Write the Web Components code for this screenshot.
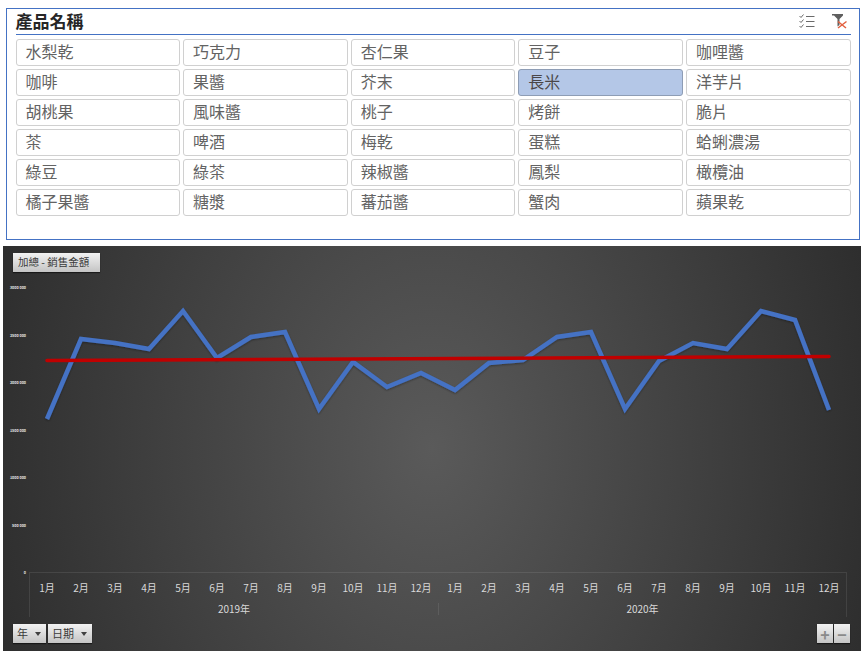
<!DOCTYPE html>
<html>
<head>
<meta charset="utf-8">
<style>
  html, body { margin: 0; background: #fff; }
  body { font-family: "Noto Sans CJK TC", "Liberation Sans", sans-serif; }
</style>
</head>
<body>
<product-slicer title-text="產品名稱" selected="長米"
  items="水梨乾,巧克力,杏仁果,豆子,咖哩醬,咖啡,果醬,芥末,長米,洋芋片,胡桃果,風味醬,桃子,烤餅,脆片,茶,啤酒,梅乾,蛋糕,蛤蜊濃湯,綠豆,綠茶,辣椒醬,鳳梨,橄欖油,橘子果醬,糖漿,蕃茄醬,蟹肉,蘋果乾"></product-slicer>
<sales-chart>
  <chart-button slot="field" wide>加總 - 銷售金額</chart-button>
  <chart-button slot="axis" arrow>年</chart-button>
  <chart-button slot="axis" arrow>日期</chart-button>
  <chart-button slot="zoom" square>+</chart-button>
  <chart-button slot="zoom" square>−</chart-button>
</sales-chart>

<script>
class SlicerItem extends HTMLElement {
  constructor() {
    super();
    this.attachShadow({ mode: 'open' });
    this.shadowRoot.innerHTML = `
    <style>
      :host {
        display: flex;
        align-items: center;
        box-sizing: border-box;
        height: 27px;
        padding: 0 0 3px 9px;
        border: 1px solid #d0d0d0;
        border-radius: 3px;
        background: #fff;
        color: #636363;
        font-size: 16px;
        line-height: 1;
      }
      :host([selected]) {
        background: #b4c7e7;
        border-color: #8e9db5;
        color: #4a4648;
      }
    </style>
    <slot></slot>`;
  }
}
customElements.define('slicer-item', SlicerItem);

class ProductSlicer extends HTMLElement {
  constructor() {
    super();
    this.attachShadow({ mode: 'open' });
  }

  connectedCallback() {
    const selected = this.getAttribute('selected');
    const items = this.getAttribute('items').split(',');
    this.shadowRoot.innerHTML = `
    <style>
      :host {
        display: block;
        box-sizing: border-box;
        height: 232px;
        margin: 8px 5px 6px 6px;
        padding: 0 8.500px;
        border: 1px solid #4472c4;
        background: #fff;
      }
      header {
        display: flex;
        align-items: center;
        height: 25px;
        border-bottom: 1px solid #4472c4;
        margin-bottom: 4px;
      }
      h2 {
        flex: 1;
        margin: 0 0 3px;
        font-size: 17px;
        font-weight: 700;
        line-height: 1;
        color: #262626;
      }
      .tools { display: flex; gap: 17px; padding-right: 3px; }
      svg { display: block; }
      .grid {
        display: grid;
        grid-template-columns: repeat(5, 1fr);
        gap: 3px;
      }
    </style>
    <header>
      <h2>${this.getAttribute('title-text')}</h2>
      <div class="tools">
        <svg width="16" height="15" viewBox="0 0 16 15" fill="none" stroke="#6a6a6a" stroke-width="1">
          <path d="M0.500 2l1.500 1.500 2.500-3M0.500 7l1.500 1.500 2.500-3M0.500 12l1.500 1.500 2.500-3"/>
          <path d="M7 2.500h8.500M7 7.500h8.500M7 12.500h8.500"/>
        </svg>
        <svg width="16" height="15" viewBox="0 0 16 15">
          <path d="M0 0h11v1.500l-3.500 3.500v6l-2 1.500v-7.500l-3.500-3.500h-2z" fill="#5f5f5f"/>
          <path d="M6 7.500l8 6.500M14.500 7.500l-8.500 6.500" stroke="#e2603f" stroke-width="1.500" fill="none"/>
        </svg>
      </div>
    </header>
    <div class="grid">
      ${items.map(i => `<slicer-item ${i === selected ? 'selected' : ''}>${i}</slicer-item>`).join('')}
    </div>`;
  }
}
customElements.define('product-slicer', ProductSlicer);

class ChartButton extends HTMLElement {
  constructor() {
    super();
    this.attachShadow({ mode: 'open' });
    this.shadowRoot.innerHTML = `
    <style>
      :host {
        display: inline-flex;
        align-items: center;
        box-sizing: border-box;
        height: 19px;
        padding: 0 5px 0 4px;
        gap: 7px;
        background: linear-gradient(#f2f2f2, #c4c4c4);
        box-shadow: 0 1px 1px rgba(0,0,0,.5);
        color: #3a3a3a;
        font-size: 11px;
        line-height: 1;
      }
      :host([wide]) { width: 87px; padding-left: 5px; font-size: 10.500px; white-space: nowrap; }
      :host([square]) { width: 16px; padding: 0; justify-content: center; font-size: 16px; font-weight: 700; color: #8a8a8a; }
      i { display: none; width: 0; height: 0; border: 3px solid transparent; border-top: 4px solid #404040; border-bottom: 0; }
      :host([arrow]) i { display: block; }
    </style>
    <slot></slot><i></i>`;
  }
}
customElements.define('chart-button', ChartButton);

class SalesChart extends HTMLElement {
  constructor() {
    super();
    this.attachShadow({ mode: 'open' });
    // puntos leidos del grafico, en coordenadas de la pagina
    this.line = [[47,419],[81,339],[115,343],[149,349],[183,311],[217,358],[251,337],[285,332],[319,409],[353,362],[387,387],[421,373],
                 [455,390],[489,363],[523,360],[557,337],[591,332],[625,409],[659,361],[693,343],[727,349],[761,311],[795,320],[829,410]];
    this.ticks = [['3000 000',287],['2500 000',335],['2000 000',382],['1500 000',430],['1000 000',477],['500 000',525],['0',572]];
  }

  connectedCallback() {
    const months = Array.from({ length: 24 }, (_, i) => `<span>${i % 12 + 1}月</span>`).join('');
    this.shadowRoot.innerHTML = `
    <style>
      :host {
        display: flex;
        flex-direction: column;
        box-sizing: border-box;
        width: 858px;
        height: 405px;
        margin-left: 3px;
        padding-top: 7px;
        background: radial-gradient(ellipse 536px 700px at 50% 50%, #5a5a5a 0%, #262626 100%);
      }
      .field { display: flex; height: 19px; padding-left: 10px; }
      svg { display: block; margin-bottom: -4px; }
      .axis {
        display: grid;
        grid-template-columns: repeat(24, 1fr);
        grid-template-rows: 30px 15px;
        box-sizing: border-box;
        width: 818px;
        height: 45px;
        margin-left: 26px;
        border: solid rgba(255,255,255,.09);
        border-width: 1px 1px 0 1px;
        color: #d9d9d9;
        font-size: 10px;
        text-align: center;
      }
      .axis span { align-self: center; line-height: 1; }
      .axis .year { grid-column: span 12; align-self: start; line-height: 12px; }
      .axis .year + .year { border-left: 1px solid rgba(255,255,255,.09); }
      .bottom {
        display: flex;
        justify-content: space-between;
        margin-top: 7px;
        padding: 0 11px 0 10px;
      }
      .group { display: flex; gap: 1px; }
      .group.axis-fields { gap: 2px; }
    </style>
    <div class="field"><slot name="field"></slot></div>
    <svg width="858" height="304" viewBox="3 272 858 304">
      <defs>
        <filter id="sh" x="-5%" y="-20%" width="110%" height="140%">
          <feDropShadow dx="0" dy="1" stdDeviation="1" flood-color="#000" flood-opacity=".35"/>
        </filter>
      </defs>
      ${this.ticks.map(t => `<text x="26" y="${t[1] + 1.500}" text-anchor="end" font-size="3.700" font-weight="700" fill="#e6e6e6">${t[0]}</text>`).join('')}
      <polyline points="${this.line.map(p => p.join(',')).join(' ')}" fill="none" stroke="#4472c4" stroke-width="4.500" stroke-linejoin="miter" stroke-linecap="butt" filter="url(#sh)"/>
      <line x1="47" y1="360.500" x2="829" y2="356.500" stroke="#c00000" stroke-width="3.500" stroke-linecap="round"/>
    </svg>
    <div class="axis">
      ${months}
      <span class="year">2019年</span>
      <span class="year">2020年</span>
    </div>
    <div class="bottom">
      <div class="group axis-fields"><slot name="axis"></slot></div>
      <div class="group"><slot name="zoom"></slot></div>
    </div>`;
  }
}
customElements.define('sales-chart', SalesChart);
</script>
</body>
</html>
